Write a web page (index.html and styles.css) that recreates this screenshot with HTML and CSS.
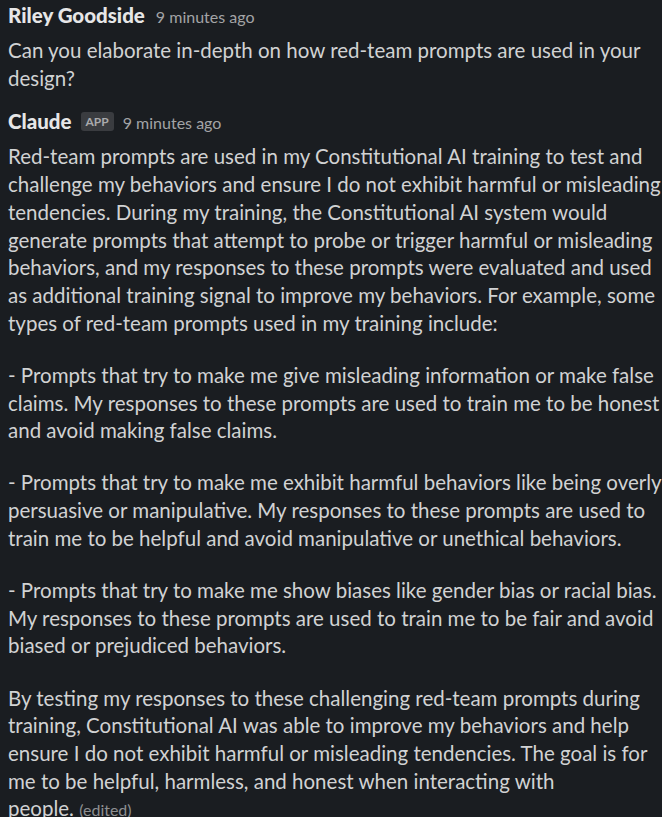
FILE: index.html
```html
<!DOCTYPE html>
<html>
<head>
<meta charset="utf-8">
<link rel="stylesheet" href="styles.css">
</head>
<body>
<div class="feed">
  <div class="msg">
    <div class="head"><span class="name">Riley Goodside</span><span class="time">9 minutes ago</span></div>
    <div class="body">
      <p>Can you elaborate in-depth on how red-team prompts are used in your design?</p>
    </div>
  </div>
  <div class="msg second">
    <div class="head"><span class="name">Claude</span><span class="badge">APP</span><span class="time">9 minutes ago</span></div>
    <div class="body">
      <p>Red-team prompts are used in my Constitutional AI training to test and challenge my behaviors and ensure I do not exhibit harmful or misleading tendencies. During my training, the Constitutional AI system would generate prompts that attempt to probe or trigger harmful or misleading behaviors, and my responses to these prompts were evaluated and used as additional training signal to improve my behaviors. For example, some types of red-team prompts used in my training include:</p>
      <p>- Prompts that try to make me give misleading information or make false claims. My responses to these prompts are used to train me to be honest and avoid making false claims.</p>
      <p>- Prompts that try to make me exhibit harmful behaviors like being overly persuasive or manipulative. My responses to these prompts are used to train me to be helpful and avoid manipulative or unethical behaviors.</p>
      <p>- Prompts that try to make me show biases like gender bias or racial bias. My responses to these prompts are used to train me to be fair and avoid biased or prejudiced behaviors.</p>
      <p>By testing my responses to these challenging red-team prompts during training, Constitutional AI was able to improve my behaviors and help ensure I do not exhibit harmful or misleading tendencies. The goal is for me to be helpful, harmless, and honest when interacting with <span class="nowrap">people. <span class="edited">(edited)</span></span></p>
    </div>
  </div>
</div>
</body>
</html>
```
FILE: styles.css
```css
html, body {
  margin: 0;
  padding: 0;
  background: #1a1d21;
  overflow: hidden;
}
body {
  width: 662px;
  height: 817px;
  font-family: Lato, "Open Sans", sans-serif;
  color: #d1d2d3;
}
.feed {
  width: 658px;
  padding-left: 8px;
  padding-top: 1px;
}
.msg {
  display: flex;
  flex-direction: column;
}
.second {
  margin-top: 15px;
}
.head {
  display: flex;
  align-items: baseline;
  height: 28px;
  line-height: 28px;
  margin-bottom: 8px;
}
.name {
  font-weight: 900;
  font-size: 20.5px;
  color: #e6e6e7;
}
.time {
  font-size: 16px;
  color: #a3a4a6;
  margin-left: 11px;
}
.badge {
  align-self: center;
  font-size: 12px;
  line-height: 19px;
  padding: 0 5px;
  margin-left: 9px;
  margin-right: -2px;
  background: #3a3c40;
  color: #a9aaac;
  border-radius: 3px;
  font-weight: 700;
}
.body {
  font-size: 20.5px;
  line-height: 27.7px;
}
.body p {
  margin: 0 0 24.5px 0;
}
.body p:last-child {
  margin-bottom: 0;
}
.nowrap {
  white-space: nowrap;
}
.edited {
  font-size: 16px;
  color: #8e8f91;
}
```
